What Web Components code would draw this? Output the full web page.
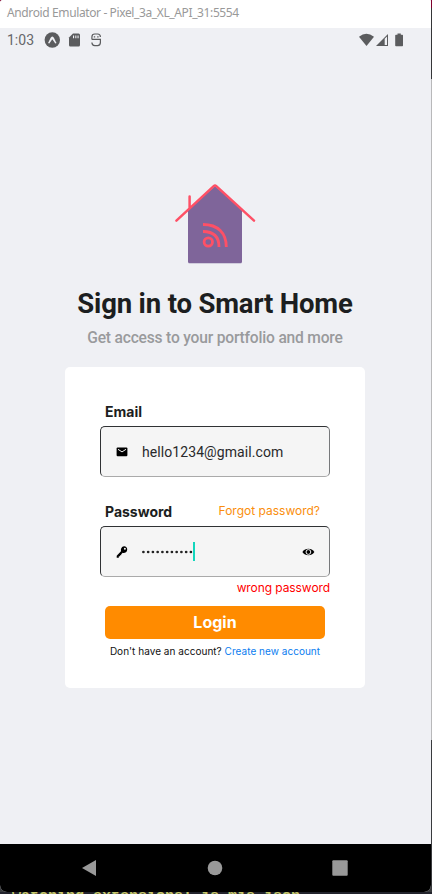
<!DOCTYPE html>
<html lang="en"><head><meta charset="utf-8"><title>Smart Home</title>
<style>
html,body{margin:0;height:894px;overflow:hidden;background:#23242e}
body{font-family:Roboto,"Liberation Sans",sans-serif;color:#1c1e21}
</style></head><body>
<emulator-window>
  <title-bar slot="title">Android Emulator - Pixel_3a_XL_API_31:5554</title-bar>
  <status-bar>1:03</status-bar>
  <sign-in-screen></sign-in-screen>
  <nav-bar></nav-bar>
</emulator-window>
<script>
const define=(name,html,setup)=>customElements.define(name,class extends HTMLElement{
  constructor(){super();this.attachShadow({mode:'open'}).innerHTML=html;if(setup)setup(this);}
});
define('title-bar',`<style>:host{display:block;height:28px;box-sizing:border-box;padding:0 7px;background:#fff;color:#999;font:12px/26px "Noto Sans",sans-serif;letter-spacing:-.38px;white-space:nowrap}</style><slot></slot>`);
define('status-bar',`<style>
:host{display:flex;height:24px;align-items:center;padding-left:7px;color:#66676a;font-size:14px;font-weight:400;letter-spacing:0}
svg{display:block;fill:#5b5c5e}span{width:37px}
.w{margin-left:auto}.b{margin-right:26px}
</style><span><slot></slot></span>
<svg width="17" height="16" viewBox="0 0 17 16"><circle cx="8.3" cy="8" r="7.7"/><path d="M4 11C5.8 8.5 6.6 4.6 8.3 4.6S10.8 8.5 12.6 11L11.3 11.6 8.3 7.2 5.3 11.6Z" fill="#eff0f4"/></svg>
<svg style="margin-left:7px" width="13" height="16" viewBox="0 0 13 16"><path d="M5 1.5H10.6Q12 1.5 12 3V13Q12 14.5 10.6 14.5H2.4Q1 14.5 1 13V5.6Z"/><path d="M5 3.5h1.1v2.7H5zM7.3 3.5h1.1v2.7H7.3zM9.5 3.5h1.1v2.7H9.5z" fill="#eff0f4"/></svg>
<svg style="margin-left:9px" width="12" height="16" viewBox="0 0 12 16"><path d="M1.9 7.6V5Q1.9 2 4.8 2H7.6Q10.4 2 10.4 5M1.9 7.4H10.4V10.6Q10.4 13.6 7.6 13.6H4.8Q1.9 13.6 1.9 10.6" fill="none" stroke="#5b5c5e" stroke-width="1.2"/><path d="M3.8 4.3h1.4v1.1H3.8zM7.2 4.3h1.4v1.1H7.2z"/></svg>
<svg class="w" width="17" height="16" viewBox="0 0 17 16"><path d="M1 4.8Q8.3-1.5 16 4.8L8.5 14Z"/></svg>
<svg width="14" height="16" viewBox="0 0 14 16"><path d="M1 14 13 2V14Z"/><path d="M9.7 6.7 12 4.5V13H9.7Z" fill="#eff0f4"/></svg>
<svg class="b" style="margin-left:5px" width="11" height="16" viewBox="0 0 11 16"><path d="M3.5 1.5H6.8V2.7H8.3Q9 2.7 9 3.5V13.6Q9 14.3 8.3 14.3H2Q1.2 14.3 1.2 13.6V3.5Q1.2 2.7 2 2.7H3.5Z"/></svg>`);
define('nav-bar',`<style>:host{display:flex;height:48px;background:#000;align-items:center;justify-content:center;gap:109px;padding-right:2px}svg{display:block;fill:#999}</style>
<svg width="16" height="16" viewBox="0 0 16 16"><path d="M0 8 14 0V16Z"/></svg><svg width="16" height="16" viewBox="0 0 16 16"><circle cx="8" cy="8" r="7.3"/></svg><svg width="16" height="16" viewBox="0 0 16 16"><rect x=".3" y=".3" width="15.4" height="15.4" rx="1"/></svg>`);
define('house-logo',`<style>:host{display:block;width:82px;height:82px}svg{display:block}</style>
<svg width="82" height="82" viewBox="0 0 82 82"><path d="M14 79V29L41 4 68 28V79Q68 80.8 66.5 80.8H15.5Q14 80.8 14 79Z" fill="#c6c0d4"/><path d="M14 78V27L41 3 68 27V78.5Q68 80 66.5 80H15.5Q14 80 14 78.5Z" fill="#7f659a"/><g fill="none" stroke="#fe5066" stroke-width="2.5" stroke-linecap="round" stroke-linejoin="round"><path d="M2.4 37.6 39.7 3.1Q41 2 42.3 3.1L80 37.6M15.6 13.4V25"/><g stroke-linecap="butt" stroke-width="2.8"><circle cx="34.3" cy="59" r="4.2"/><path d="M29 48.5Q45 48.5 45 64M29 41.5C44 41.5 52.3 50 52.3 64"/></g></g></svg>`);
define('form-field',`<style>
:host{display:flex;box-sizing:border-box;width:230px;height:51px;border:1px solid #303234;border-right-color:#77797b;border-bottom-color:#aaa;border-radius:5px;background:#f5f5f5;align-items:center;padding:0 14px;font-size:14px;letter-spacing:.08px;color:#29292b}
.v{flex:1;display:flex;align-items:center;margin-left:13px;white-space:nowrap}
</style><slot name="icon"></slot><span class="v"><slot></slot></span><slot name="end"></slot>`);
define('glyph-icon',`<style>:host{display:block;width:14px;height:14px}svg{display:block;overflow:visible}</style><svg width="14" height="14" viewBox="0 0 14 14"></svg>`,el=>{
 const shapes={mail:'<rect x="1.6" y="2.6" width="10.8" height="8.6" rx="1"/><path d="M3 4.3 7 6.9 11 4.3" stroke="#f5f5f5" fill="none"/>',
 key:'<path d="M1.7 12.7V10.8L6 6.3Q5.3 3.9 7.1 2.1C9 .4 12.5 1.5 12.2 4.8C12 7.4 9.5 8.4 7.7 7.8L6.2 9.2V10.2H5V11.3H3.8V12.7Z"/><circle cx="9.9" cy="3.8" r="1" fill="#f5f5f5"/>',
 eye:'<path d="M1.4 7C4.2 2.6 10.5 2.6 13.4 7C10.5 11.4 4.2 11.4 1.4 7Z"/><circle cx="7.4" cy="7" r="2.4" fill="none" stroke="#f5f5f5" stroke-width="1"/>'};
 el.shadowRoot.querySelector('svg').innerHTML=shapes[el.getAttribute('name')]||'';
});
define('masked-value',`<style>:host{display:flex;align-items:center;height:20px}svg{display:block}b{width:2px;height:19px;background:#13d6bd}</style><svg width="51" height="6" viewBox="0 0 51 6" fill="#222">${Array.from({length:11},(_,i)=>`<circle cx="${1.4+i*4.75}" cy="3" r="1.35"/>`).join('')}</svg><b></b>`);
define('sign-in-screen',`<style>
:host{display:flex;flex-direction:column;align-items:center;height:792px;padding-right:1px}
house-logo{margin-top:131px}
h1,p{margin:0;white-space:nowrap}
h1{margin-top:20px;font-size:27.5px;line-height:38px;font-weight:700;letter-spacing:-.17px;color:#1c1e20}
.sub{font-size:15.6px;font-weight:500;line-height:24px;margin-top:3px;letter-spacing:-.2px;color:#999a9c;margin-bottom:17px}
.card{box-sizing:border-box;width:300px;height:321px;background:#fff;border-radius:5px;padding:35px 35px 0;display:flex;flex-direction:column}
.row{display:flex;height:20px;padding:0 10px 0 5px;justify-content:space-between;font:700 14px/20px Inter,sans-serif;margin-bottom:4px}
.row+form-field+.row{margin-top:25px}
.forgot{font:400 12px/17px Inter,sans-serif;color:#fa8e0c}
.err{font:400 12px/16px Inter,sans-serif;letter-spacing:-.08px;color:#f00;text-align:right;margin-top:3px}
.btn{border:0;padding:0;margin:10px 5px 0;height:33px;border-radius:5px;background:#ff8b00;color:#fff;font:700 16px/33px Inter,sans-serif}
.new{font:400 10px/14px Inter,sans-serif;letter-spacing:.03px;text-align:center;margin-top:5px;color:#111}
a{color:#0a7df0}
</style>
<house-logo></house-logo><h1>Sign in to Smart Home</h1><p class="sub">Get access to your portfolio and more</p>
<div class="card"><div class="row"><span>Email</span></div>
<form-field><glyph-icon slot="icon" name="mail"></glyph-icon>hello1234@gmail.com</form-field>
<div class="row"><span>Password</span><span class="forgot">Forgot password?</span></div>
<form-field><glyph-icon slot="icon" name="key"></glyph-icon><masked-value></masked-value><glyph-icon slot="end" name="eye"></glyph-icon></form-field>
<p class="err">wrong password</p><button class="btn">Login</button><p class="new">Don't have an account? <a>Create new account</a></p></div>`,el=>{
 el.shadowRoot.querySelectorAll('glyph-icon').forEach(i=>customElements.upgrade(i));
});
define('emulator-window',`<style>
:host{display:block;width:432px;height:894px;overflow:hidden;background:linear-gradient(#80002d 0 8px,#353638 8px 79px,#b8b8ba 79px 740px,#393b3e 740px)}
.win{width:431px;height:892px;background:#eff0f4;border-radius:3px 1px 7px 7px;overflow:hidden}
.term{height:2px;overflow:hidden;background:#22232c;padding-left:12px;color:#c5c76a;font:700 15px/17px "Liberation Mono",monospace;white-space:nowrap}
.term span{display:block;margin-top:-4px}
</style><div class="win"><slot name="title"></slot><slot></slot></div><div class="term"><span>watching extensions: js,mjs,json</span></div>`);
</script></body></html>
